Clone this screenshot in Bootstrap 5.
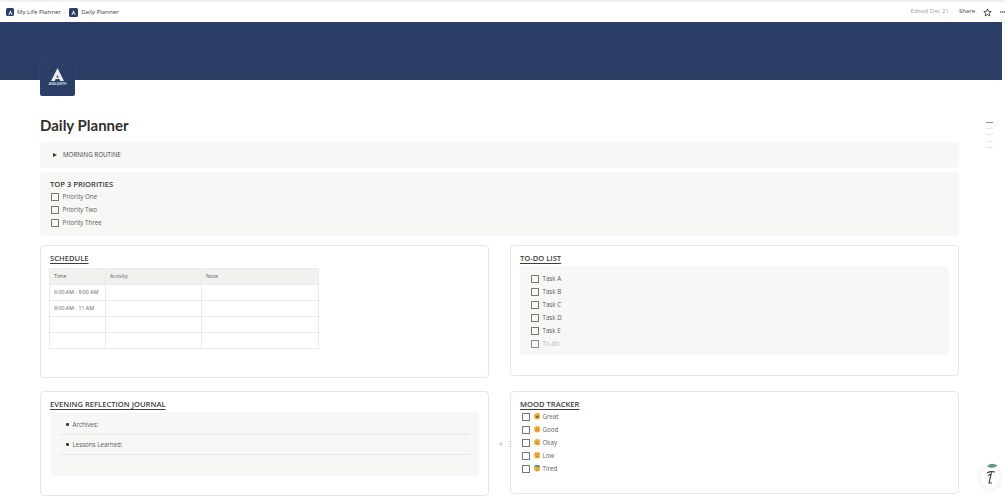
<!DOCTYPE html>
<html lang="en">
<head>
<meta charset="utf-8">
<title>Daily Planner</title>
<link rel="stylesheet" href="https://cdn.jsdelivr.net/npm/bootstrap@5.3.0/dist/css/bootstrap.min.css">
<style>
html,body{height:501px;overflow:hidden;background:#fff}
body{font-family:"Open Sans","Liberation Sans",sans-serif;color:#3d3d3b;font-size:6.2px;line-height:1.2;position:relative}
.topbar{height:22px;border-top:2px solid #f1f1f0;padding:0 0 0 6px;font-size:6.1px}
.crumb-logo{width:8px;height:8px;border-radius:1.5px;background:#2b3f66;display:flex;align-items:center;justify-content:center}
.crumb-logo.wide{width:9px;height:9px}
.crumb-name{margin-left:3px}
.crumb-sep{color:#c9c8c5;margin:0 3px}
.edited{color:#a3a2a0;margin-right:10px;font-size:6px}
.share{margin-right:8px;font-size:6px}
.star-icon{margin-right:8px}
.banner{height:58px;width:1002px;background:#2b3f66}
.page-logo{width:35px;height:35px;margin:-19px 0 0 40px;background:#2b3f66;border-radius:2px;position:relative;display:flex;flex-direction:column;align-items:center;padding-top:7px;box-shadow:0 0 1px rgba(255,255,255,.25)}
.page-logo span{color:#dfe3ea;font-size:3px;font-weight:700;line-height:1;margin-top:2px}
.page-body{width:919px;margin-left:40px}
.page-title{font-family:Lato,"Open Sans",sans-serif;font-size:15px;font-weight:700;line-height:20px;margin:19px 0 7px;color:#32302c}
.callout{background:#f7f7f5;border-radius:4px}
.routine{height:26px;padding-left:13px;margin-bottom:4px;font-size:6.2px}
.routine i{display:block;width:0;height:0;border-left:4px solid #37352f;border-top:2.3px solid transparent;border-bottom:2.3px solid transparent;margin-right:6px}
.priorities{height:64px;padding:7px 10px;margin-bottom:9px}
.sec-head{font-size:7.6px;font-weight:600;line-height:10px;color:#3d3d3b}
.head-gap{margin-bottom:1.5px}
.sec-link{text-decoration:underline;text-underline-offset:1.5px;text-decoration-thickness:.7px}
.check{height:13px;color:#5c5c5a}
.box{width:8px;height:8px;border:1px solid #777775;flex:none;margin:0 3.5px 0 1px;border-radius:.5px}
.muted{color:#b8b7b3}
.muted-box{border-color:#8e8d89}
.two{display:grid;grid-template-columns:449px 449px;column-gap:21px}
.pane{border:1px solid #e6e6e4;border-radius:4px;padding:7px 9px}
.pane-a{height:133px}
.pane-b{height:131px}
.pane-c{height:105px;margin-top:13px}
.pane-d{height:103px;margin-top:13px}
.sched{border-collapse:collapse;table-layout:fixed;width:269px;margin:5px 0 0 -1px;font-size:5.3px;color:#5c5c5a}
.sched th,.sched td{border:1px solid #ecebe9;height:16px;padding:0 4px;font-weight:400;vertical-align:middle}
.sched th{background:#f1f1ef}
.todo{height:89px;margin-top:3px;padding:6.500px 10px}
.journal{height:64px;margin-top:3px;padding:3px 9px 0}
.j-row{height:20px;border-bottom:1px solid #e9e8e6;color:#5c5c5a;padding-left:7px}
.j-row b{display:block;width:2.5px;height:2.5px;border-radius:50%;background:#37352f;margin-right:4px}
.mood{margin-top:1px;margin-left:1px}
.mood svg{margin:0 2.500px 0 0;flex:none}
.grip{position:absolute;left:498px;top:440px;width:16px;height:8px;color:#c4c3c0}
.toc{position:absolute;left:986px;top:122px;width:7px}
.toc div{height:1px;background:#e7e6e4;margin-bottom:5.2px}
.toc div:first-child{background:#8f8e8b}
.help{position:absolute;left:980px;top:467px;width:20px;height:22px;border-radius:50%;background:#fff;box-shadow:0 0 4px rgba(0,0,0,.12)}
.help-art{position:absolute;left:984px;top:463px}
</style>
</head>
<body>
<header class="topbar d-flex align-items-center">
  <span class="crumb-logo"><svg width="5" height="5" viewBox="0 0 10 10"><path d="M5 .5 9.5 9.5H7L5 5.5 3 9.5H.5z" fill="#e3e6ec"/></svg></span>
  <span class="crumb-name">My Life Planner</span>
  <span class="crumb-sep">/</span>
  <span class="crumb-logo wide"><svg width="5" height="5" viewBox="0 0 10 10"><path d="M5 .5 9.5 9.5H7L5 5.5 3 9.5H.5z" fill="#e3e6ec"/></svg></span>
  <span class="crumb-name">Daily Planner</span>
  <span class="ms-auto edited">Edited Dec 21</span>
  <span class="share">Share</span>
  <svg class="star-icon" width="9" height="9" viewBox="0 0 20 20"><path d="M10 2l2.4 5.3 5.8.6-4.3 3.9 1.2 5.7L10 14.6l-5.1 2.9 1.2-5.7L1.800 7.900l5.800-.6z" fill="none" stroke="#37352f" stroke-width="2"/></svg>
  <svg width="5" height="2" viewBox="0 0 5 2"><circle cx=".8" cy="1" r=".7" fill="#37352f"/><circle cx="2.500" cy="1" r=".7" fill="#37352f"/><circle cx="4.200" cy="1" r=".7" fill="#37352f"/></svg>
</header>
<div class="banner"></div>
<div class="page-logo">
  <svg width="13" height="13" viewBox="0 0 26 26"><path d="M13 0 26 26H18.500L13 14 7.500 26H0z" fill="#e9ebf0"/><path d="M9 19h8v3H9z" fill="#e9ebf0"/></svg>
  <span>AVALQHITH</span>
</div>
<main class="page-body">
  <h1 class="page-title">Daily Planner</h1>
  <div class="callout routine d-flex align-items-center"><i></i><span>MORNING ROUTINE</span></div>
  <section class="callout priorities">
    <div class="sec-head head-gap">TOP 3 PRIORITIES</div>
    <div class="check d-flex align-items-center"><span class="box"></span>Priority One</div>
    <div class="check d-flex align-items-center"><span class="box"></span>Priority Two</div>
    <div class="check d-flex align-items-center"><span class="box"></span>Priority Three</div>
  </section>
  <div class="two align-items-start">
    <section class="pane pane-a">
      <div class="sec-head sec-link">SCHEDULE</div>
      <table class="sched">
        <colgroup><col style="width:56px"><col style="width:96px"><col style="width:117px"></colgroup>
        <tr><th>Time</th><th>Activity</th><th>Note</th></tr>
        <tr><td>6:00 AM - 9:00 AM</td><td></td><td></td></tr>
        <tr><td>9:00 AM - 11 AM</td><td></td><td></td></tr>
        <tr><td></td><td></td><td></td></tr>
        <tr><td></td><td></td><td></td></tr>
      </table>
    </section>
    <section class="pane pane-b">
      <div class="sec-head sec-link">TO-DO LIST</div>
      <div class="callout todo">
        <div class="check d-flex align-items-center"><span class="box"></span>Task A</div>
        <div class="check d-flex align-items-center"><span class="box"></span>Task B</div>
        <div class="check d-flex align-items-center"><span class="box"></span>Task C</div>
        <div class="check d-flex align-items-center"><span class="box"></span>Task D</div>
        <div class="check d-flex align-items-center"><span class="box"></span>Task E</div>
        <div class="check d-flex align-items-center muted"><span class="box muted-box"></span>To-do</div>
      </div>
    </section>
    <section class="pane pane-c">
      <div class="sec-head sec-link">EVENING REFLECTION JOURNAL</div>
      <div class="callout journal">
        <div class="j-row d-flex align-items-center"><b></b>Archives:</div>
        <div class="j-row d-flex align-items-center"><b></b>Lessons Learned:</div>
      </div>
    </section>
    <section class="pane pane-d">
      <div class="sec-head sec-link">MOOD TRACKER</div>
      <div class="mood">
        <div class="check d-flex align-items-center"><span class="box"></span><svg width="6.500" height="6.500" viewBox="0 0 12 12"><circle cx="6" cy="6" r="6" fill="#f2b33d"/><path d="M3 6h6a3 3 0 0 1-6 0z" fill="#7a4a1e"/><circle cx="4" cy="4" r=".9" fill="#7a4a1e"/><circle cx="8" cy="4" r=".9" fill="#7a4a1e"/></svg>Great</div>
        <div class="check d-flex align-items-center"><span class="box"></span><svg width="6.500" height="6.500" viewBox="0 0 12 12"><circle cx="6" cy="6" r="6" fill="#f2b33d"/><path d="M3.500 7.500q2.500 2 5 0" fill="none" stroke="#7a4a1e"/><circle cx="4" cy="4.500" r=".9" fill="#7a4a1e"/><circle cx="8" cy="4.500" r=".9" fill="#7a4a1e"/></svg>Good</div>
        <div class="check d-flex align-items-center"><span class="box"></span><svg width="6.500" height="6.500" viewBox="0 0 12 12"><circle cx="6" cy="6" r="6" fill="#f2b33d"/><path d="M4 8h4" stroke="#7a4a1e"/><circle cx="4" cy="4.500" r=".9" fill="#7a4a1e"/><circle cx="8" cy="4.500" r=".9" fill="#7a4a1e"/></svg>Okay</div>
        <div class="check d-flex align-items-center"><span class="box"></span><svg width="6.500" height="6.500" viewBox="0 0 12 12"><circle cx="6" cy="6" r="6" fill="#f2b33d"/><path d="M3.500 8.500q2.500-2 5 0" fill="none" stroke="#7a4a1e"/><path d="M2.500 3.500l2.500 1M9.500 3.500l-2.500 1" stroke="#7a4a1e"/></svg>Low</div>
        <div class="check d-flex align-items-center"><span class="box"></span><svg width="6.500" height="6.500" viewBox="0 0 12 12"><circle cx="6" cy="6" r="6" fill="#f2b33d"/><path d="M1 4a5 5 0 0 1 10 0z" fill="#5c8fa8"/><path d="M4 9h4" stroke="#7a4a1e"/></svg>Tired</div>
      </div>
    </section>
  </div>
</main>
<div class="grip"><svg width="16" height="8" viewBox="0 0 16 8"><path d="M3 1.500v5M.5 4h5" stroke="currentColor" stroke-width=".8"/><g fill="currentColor"><circle cx="11" cy="1.500" r=".6"/><circle cx="13" cy="1.500" r=".6"/><circle cx="11" cy="4" r=".6"/><circle cx="13" cy="4" r=".6"/><circle cx="11" cy="6.500" r=".6"/><circle cx="13" cy="6.500" r=".6"/></g></svg></div>
<nav class="toc"><div></div><div></div><div></div><div></div><div></div></nav>
<div class="help"></div>
<svg class="help-art" width="16" height="22" viewBox="0 0 16 22"><path d="M3 3Q7 0 9.500 1q3 .5 4 1.500-3 2.500-6 2.200Q5 5 3 3z" fill="#5d9a7d"/><path d="M3 10q3-2 8-1M7.500 9.500 5 20h3M4 12.500l3.500-1.500" fill="none" stroke="#3c3b38" stroke-width="1.100"/></svg>
</body>
</html>
